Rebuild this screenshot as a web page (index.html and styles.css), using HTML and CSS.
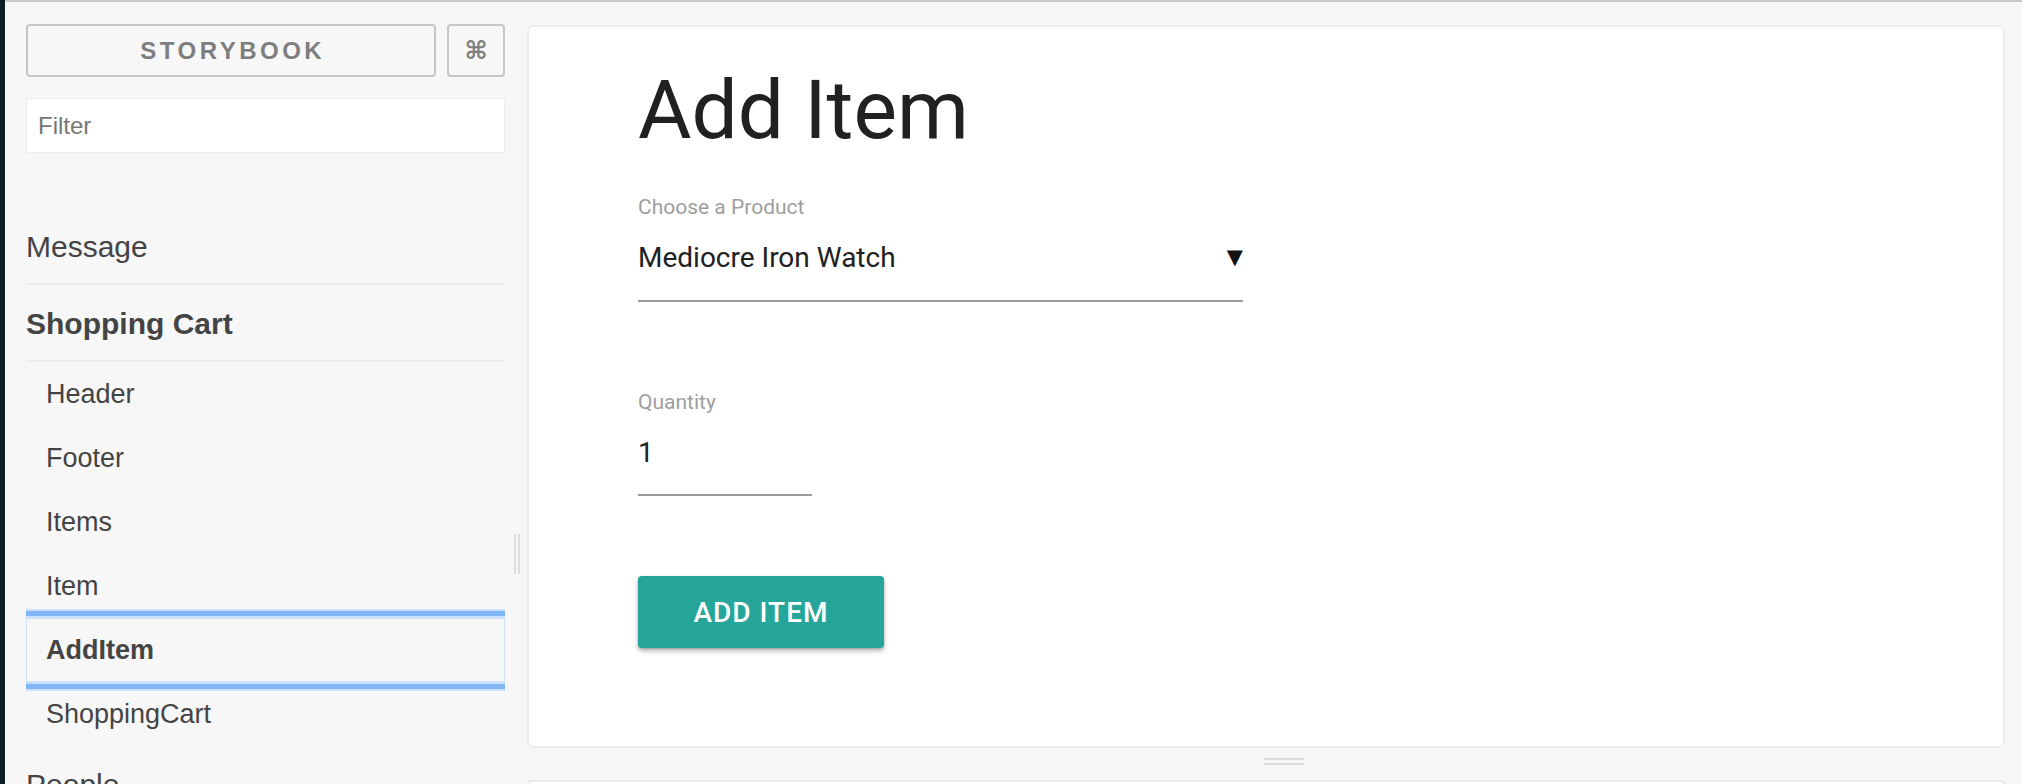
FILE: index.html
```html
<!DOCTYPE html>
<html lang="en">
<head>
<meta charset="utf-8">
<title>Storybook - Add Item</title>
<link rel="stylesheet" href="styles.css">
</head>
<body>
<div class="app">
  <div class="strip"></div>
  <div class="shell">
    <aside class="sidebar">
      <div class="head">
        <div class="brand">STORYBOOK</div>
        <div class="cmd">⌘</div>
      </div>
      <input class="filter" type="text" placeholder="Filter">
      <ul class="kinds">
        <li class="kind">
          <div class="kind-name">Message</div>
        </li>
        <li class="kind">
          <div class="kind-name active">Shopping Cart</div>
          <ul class="stories">
            <li class="story">Header</li>
            <li class="story">Footer</li>
            <li class="story">Items</li>
            <li class="story">Item</li>
            <li class="story selected">AddItem</li>
            <li class="story">ShoppingCart</li>
          </ul>
        </li>
        <li class="kind">
          <div class="kind-name plain">People</div>
        </li>
      </ul>
    </aside>
    <div class="vhandle"><span class="vline"></span><span class="vline"></span></div>
    <main class="main">
      <section class="preview">
        <h1 class="title">Add Item</h1>
        <div class="label first">Choose a Product</div>
        <div class="select">
          <span class="value">Mediocre Iron Watch</span>
          <span class="arrow">▼</span>
        </div>
        <div class="label second">Quantity</div>
        <div class="qty"><span class="value">1</span></div>
        <button class="btn" type="button">ADD ITEM</button>
      </section>
      <div class="hhandle"><span class="hline"></span><span class="hline"></span></div>
      <section class="addons"></section>
    </main>
  </div>
</div>
</body>
</html>
```

FILE: styles.css
```css
html, body {
  margin: 0;
  padding: 0;
  height: 784px;
  overflow: hidden;
  background: #f7f7f7;
}

.app {
  display: flex;
  height: 784px;
}

.strip {
  width: 5px;
  flex: none;
  background: #0c1f25;
}

.shell {
  flex: 1;
  display: flex;
  border-top: 2px solid #cbcbcb;
  background: #f7f7f7;
  min-width: 0;
}

/* ---------- sidebar ---------- */
.sidebar {
  width: 505px;
  flex: none;
  box-sizing: border-box;
  padding: 22px 5px 0 21px;
  font-family: "Liberation Sans", Arial, sans-serif;
  color: #444444;
}

.head {
  display: flex;
  gap: 11px;
  height: 53px;
}

.brand,
.cmd {
  box-sizing: border-box;
  border: 2px solid #c6c6c6;
  border-radius: 4px;
  display: flex;
  align-items: center;
  justify-content: center;
  color: #7e7e7e;
  font-weight: bold;
}

.brand {
  width: 410px;
  font-size: 24px;
  letter-spacing: 3.5px;
  text-indent: 3.5px;
}

.cmd {
  flex: 1;
  font-family: "DejaVu Sans", sans-serif;
  font-size: 25px;
}

.filter {
  display: block;
  margin: 21px 0 0;
  width: 100%;
  height: 55px;
  box-sizing: border-box;
  border: 1px solid #ececec;
  border-radius: 2px;
  background: #ffffff;
  padding: 0 11px;
  font-family: "Liberation Sans", Arial, sans-serif;
  font-size: 24px;
  color: #444;
  outline: none;
}

.filter::placeholder {
  color: #767676;
}

.kinds {
  list-style: none;
  margin: 55px 0 0;
  padding: 0;
}

.kind-name {
  font-size: 30px;
  line-height: 36px;
  padding: 21px 0 18px;
  border-bottom: 2px solid #ececec;
}

.kind-name.active {
  font-weight: bold;
}

.kind-name.plain {
  border-bottom: none;
}

.stories {
  list-style: none;
  margin: 0;
  padding: 0;
}

.story {
  height: 64px;
  line-height: 64px;
  font-size: 27px;
  padding-left: 20px;
}

.story.selected {
  font-weight: bold;
  background: #f7f7f7;
  box-shadow:
    inset 0 0 0 1px #cde2fa,
    0 -2px 0 #c9dffa,
    0 -7px 0 #80b7f6,
    0 -9px 0 #c9dffa,
    0 2px 0 #c9dffa,
    0 7px 0 #80b7f6,
    0 9px 0 #c9dffa;
}

/* ---------- resize handles ---------- */
.vhandle {
  width: 17px;
  flex: none;
  box-sizing: border-box;
  padding: 532px 0 0 4px;
  display: flex;
  gap: 2px;
  align-items: flex-start;
}

.vline {
  width: 2px;
  height: 40px;
  background: #dddddd;
}

.hhandle {
  height: 32px;
  flex: none;
  box-sizing: border-box;
  padding: 10px 0 0 737px;
  display: flex;
  flex-direction: column;
  gap: 3px;
}

.hline {
  width: 40px;
  height: 2px;
  background: #dcdcdc;
}

/* ---------- main ---------- */
.main {
  flex: 1;
  display: flex;
  flex-direction: column;
  padding: 23px 17px 0 0;
  min-width: 0;
}

.preview {
  height: 723px;
  flex: none;
  box-sizing: border-box;
  background: #ffffff;
  border: 2px solid #ececec;
  border-radius: 6px;
  padding: 33px 0 0 109px;
  font-family: Roboto, "Liberation Sans", sans-serif;
  color: #212121;
}

.addons {
  flex: 1;
  background: #ffffff;
  border: 2px solid #ececec;
  border-bottom: none;
  border-radius: 6px 6px 0 0;
}

.title {
  margin: 0;
  font-weight: 400;
  font-size: 82px;
  line-height: 100px;
  color: #212121;
}

.label {
  font-size: 21px;
  line-height: 24px;
  color: #9e9e9e;
}

.label.first {
  margin-top: 35px;
}

.label.second {
  margin-top: 88px;
}

.select {
  margin-top: 23px;
  width: 605px;
  display: flex;
  justify-content: space-between;
  align-items: flex-start;
  padding-bottom: 26px;
  border-bottom: 2px solid #9a9a9a;
}

.value {
  font-size: 28px;
  line-height: 32px;
  color: #212121;
}

.arrow {
  font-family: "DejaVu Sans", sans-serif;
  font-size: 21px;
  line-height: 30px;
  color: #111;
}

.qty {
  margin-top: 23px;
  width: 174px;
  padding-bottom: 25px;
  border-bottom: 2px solid #9a9a9a;
}

.btn {
  display: flex;
  align-items: center;
  justify-content: center;
  margin-top: 80px;
  width: 246px;
  height: 72px;
  border: none;
  border-radius: 4px;
  background: #26a69a;
  color: #ffffff;
  font-family: Roboto, "Liberation Sans", sans-serif;
  font-weight: 500;
  font-size: 28px;
  letter-spacing: 1px;
  box-shadow: 0 3px 5px rgba(0, 0, 0, 0.28), 0 1px 2px rgba(0, 0, 0, 0.15);
  padding: 0;
}
```
